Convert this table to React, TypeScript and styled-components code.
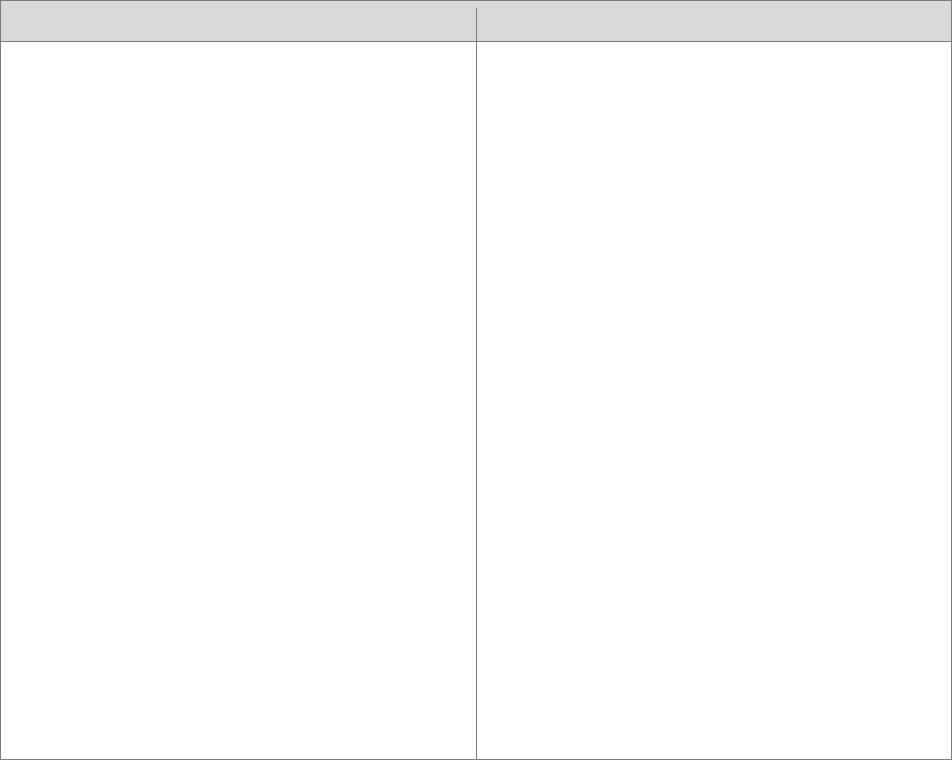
import React from "react";
import styled, { createGlobalStyle } from "styled-components";

const Global = createGlobalStyle`
  html, body { margin: 0; padding: 0; background: #ffffff; }
  body { font-family: "Liberation Sans", Arial, sans-serif; }
  * { box-sizing: border-box; }
`;

const Frame = styled.div`
  width: 952px;
  height: 760px;
  border: 1px solid #7b7b7b;
  display: grid;
  grid-template-rows: 41px 1fr;
  background: #ffffff;
`;

const Header = styled.div`
  display: grid;
  grid-template-columns: 475px 1fr;
  background: #d9d9d9;
  border-bottom: 1px solid #7b7b7b;
`;

const HeaderCell = styled.div<{ $divider?: boolean }>`
  margin-top: ${(p) => (p.$divider ? "7px" : "0")};
  border-left: ${(p) => (p.$divider ? "1px solid #7b7b7b" : "none")};
`;

const Body = styled.div`
  display: grid;
  grid-template-columns: 476px 1fr;
`;

const Column = styled.div<{ $divider?: boolean }>`
  border-right: ${(p) => (p.$divider ? "1px solid #7b7b7b" : "none")};
`;

export default function App() {
  return (
    <>
      <Global />
      <Frame>
        <Header>
          <HeaderCell />
          <HeaderCell $divider />
        </Header>
        <Body>
          <Column $divider />
          <Column />
        </Body>
      </Frame>
    </>
  );
}
